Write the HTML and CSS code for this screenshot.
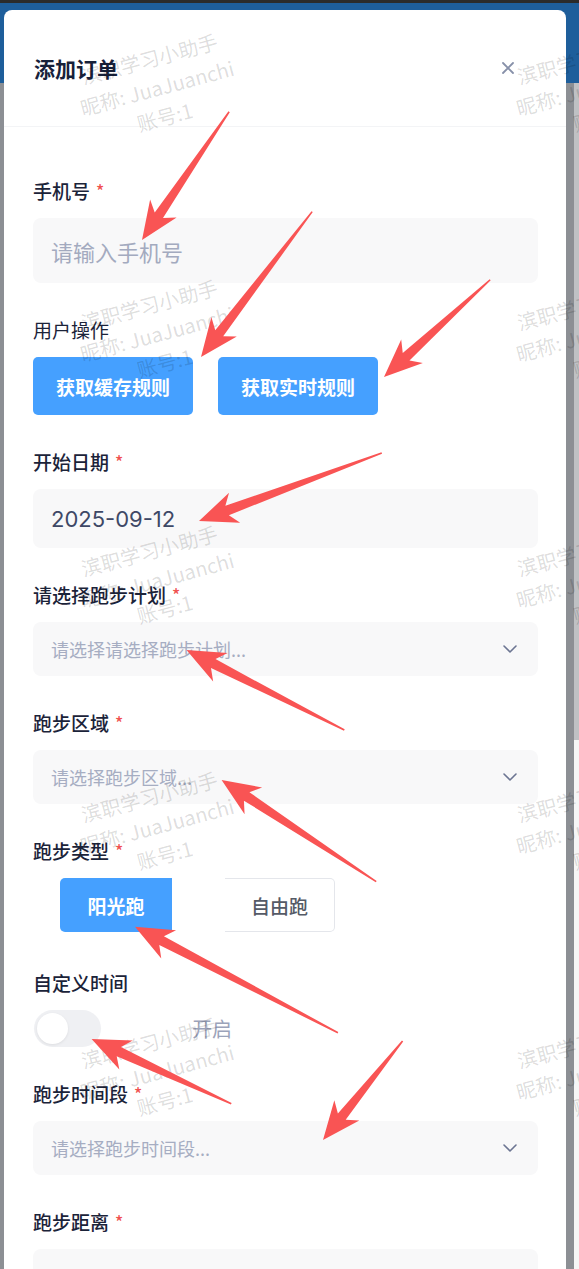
FILE: index.html
```html
<!DOCTYPE html>
<html lang="zh-CN">
<head>
	<meta charset="UTF-8">
	<title>添加订单</title>
	<link rel="stylesheet" href="styles.css">
</head>
<body>
<div class="dialog">
	<div class="dialog-head">
		<h3 class="dialog-title">添加订单</h3>
		<span class="dialog-close">
			<svg viewBox="0 0 12 12" width="12" height="12"><path d="M1 1l10 10M11 1L1 11" stroke="#8790a9" stroke-width="1.8" stroke-linecap="round" fill="none"/></svg>
		</span>
	</div>
	<div class="dialog-body">
		<div class="form-item">
			<div class="form-label req">手机号</div>
			<div class="field field-phone">请输入手机号</div>
		</div>
		<div class="form-item">
			<div class="form-label plain">用户操作</div>
			<div class="btn-row">
				<div class="btn">获取缓存规则</div>
				<div class="btn">获取实时规则</div>
			</div>
		</div>
		<div class="form-item">
			<div class="form-label req">开始日期</div>
			<div class="field field-date">2025-09-12</div>
		</div>
		<div class="form-item">
			<div class="form-label req">请选择跑步计划</div>
			<div class="field select">请选择请选择跑步计划...<svg class="arrow-down" viewBox="0 0 14 8" width="14" height="8"><path d="M1 1l6 6 6-6" stroke="#6c7592" stroke-width="1.6" fill="none" stroke-linecap="round" stroke-linejoin="round"/></svg></div>
		</div>
		<div class="form-item">
			<div class="form-label req">跑步区域</div>
			<div class="field select">请选择跑步区域...<svg class="arrow-down" viewBox="0 0 14 8" width="14" height="8"><path d="M1 1l6 6 6-6" stroke="#6c7592" stroke-width="1.6" fill="none" stroke-linecap="round" stroke-linejoin="round"/></svg></div>
		</div>
		<div class="form-item form-item-seg">
			<div class="form-label req">跑步类型</div>
			<div class="seg">
				<div class="seg-item seg-on">阳光跑</div>
				<div class="seg-item seg-off">自由跑</div>
			</div>
		</div>
		<div class="form-item">
			<div class="form-label">自定义时间</div>
			<div class="switch-row">
				<div class="switch"><div class="knob"></div></div>
				<span class="switch-text">开启</span>
			</div>
		</div>
		<div class="form-item">
			<div class="form-label req">跑步时间段</div>
			<div class="field select">请选择跑步时间段...<svg class="arrow-down" viewBox="0 0 14 8" width="14" height="8"><path d="M1 1l6 6 6-6" stroke="#6c7592" stroke-width="1.6" fill="none" stroke-linecap="round" stroke-linejoin="round"/></svg></div>
		</div>
		<div class="form-item">
			<div class="form-label req">跑步距离</div>
			<div class="field select"></div>
		</div>
	</div>
</div>

<div class="watermark">
	<div class="wm"><div class="wm-text">滨职学习小助手<br>昵称: JuaJuanchi<br>账号:1</div></div>
	<div class="wm"><div class="wm-text">滨职学习小助手<br>昵称: JuaJuanchi<br>账号:1</div></div>
	<div class="wm"><div class="wm-text">滨职学习小助手<br>昵称: JuaJuanchi<br>账号:1</div></div>
	<div class="wm"><div class="wm-text">滨职学习小助手<br>昵称: JuaJuanchi<br>账号:1</div></div>
	<div class="wm"><div class="wm-text">滨职学习小助手<br>昵称: JuaJuanchi<br>账号:1</div></div>
	<div class="wm"><div class="wm-text">滨职学习小助手<br>昵称: JuaJuanchi<br>账号:1</div></div>
	<div class="wm"><div class="wm-text">滨职学习小助手<br>昵称: JuaJuanchi<br>账号:1</div></div>
	<div class="wm"><div class="wm-text">滨职学习小助手<br>昵称: JuaJuanchi<br>账号:1</div></div>
	<div class="wm"><div class="wm-text">滨职学习小助手<br>昵称: JuaJuanchi<br>账号:1</div></div>
	<div class="wm"><div class="wm-text">滨职学习小助手<br>昵称: JuaJuanchi<br>账号:1</div></div>
</div>

<!-- red annotation arrows, tip at origin, tail along +x -->
<svg class="marks" width="579" height="1269" viewBox="0 0 579 1269">
	<g fill="#f95454">
		<polygon transform="translate(142 240) rotate(-55.8)" points="0,0 38,-16 30,-5 155,-0.8 155,0.8 30,5 38,16"/>
		<polygon transform="translate(201 357) rotate(-52.6)" points="0,0 38,-16 30,-5 183,-0.8 183,0.8 30,5 38,16"/>
		<polygon transform="translate(384 377) rotate(-42.5)" points="0,0 38,-16 30,-5 144,-0.8 144,0.8 30,5 38,16"/>
		<polygon transform="translate(199 521) rotate(-20.4)" points="0,0 38,-16 30,-5 195,-0.8 195,0.8 30,5 38,16"/>
		<polygon transform="translate(186.5 650) rotate(26.9)" points="0,0 38,-16 30,-5 177,-0.8 177,0.8 30,5 38,16"/>
		<polygon transform="translate(221.6 780) rotate(33.3)" points="0,0 38,-16 30,-5 185,-0.8 185,0.8 30,5 38,16"/>
		<polygon transform="translate(135 926.7) rotate(27.6)" points="0,0 38,-16 30,-5 229,-0.8 229,0.8 30,5 38,16"/>
		<polygon transform="translate(91.6 1039) rotate(24.9)" points="0,0 38,-16 30,-5 154,-0.8 154,0.8 30,5 38,16"/>
		<polygon transform="translate(323 1140) rotate(-51.2)" points="0,0 38,-16 30,-5 127,-0.8 127,0.8 30,5 38,16"/>
	</g>
</svg>
</body>
</html>
```

FILE: styles.css
```css
*{
	margin: 0;
	padding: 0;
	box-sizing: border-box;
}
body{
	position: relative;
	width: 579px;
	height: 1269px;
	overflow: hidden;
	font-family: "Noto Sans CJK SC", "Noto Sans", sans-serif;
	background:
		linear-gradient(#f6f6f6, #f6f6f6) 574px 740px / 5px 529px no-repeat,
		linear-gradient(#bfc1c4, #bfc1c4) 574px 83px / 5px 657px no-repeat,
		linear-gradient(#2b2b2b 0 3px, #1e5e9b 3px 83px, #8c8f94 83px);
}

.dialog{margin:10px 0 0 4px; width:562px; height:1259px; background:#fff; border-radius:8px 8px 0 0; overflow:hidden;}
.dialog-head{height:117px; display:flex; align-items:center; justify-content:space-between; padding:0 52px 0 30px; border-bottom:1px solid #f3f4f6;}
.dialog-title{font-size:21px; font-weight:700; color:#17213a;}
.dialog-close svg{display:block;}
.dialog-body{padding:53px 28px 0 29px;}

.form-item{margin-bottom:36px;}
.form-item-seg{margin-bottom:40px;}
.form-label{height:22px; font-size:19px; line-height:22px; margin-bottom:16px; color:#1b2339; font-weight:500; white-space:nowrap;}
.form-label.plain{font-weight:400;}
.req::after{content:"*"; display:inline-block; vertical-align:top; line-height:22px; color:#f0524f; margin-left:6px; font-size:17px;}

.field{display:flex; align-items:center; justify-content:space-between; padding:0 21px 0 18px; background:#f8f8f9; border-radius:8px;}
.field-phone{height:65px; font-size:22px; color:#a3aabf;}
.field-date{height:59px; font-family:"Inter", sans-serif; font-size:22px; color:#3e4866;}
.select{height:54px; font-size:18px; color:#a6adc2;}
.arrow-down{display:block; flex:none;}

.btn-row{display:flex; gap:25px;}
.btn{width:160px; height:58px; display:flex; align-items:center; justify-content:center; background:#45a0ff; border-radius:5px; color:#fff; font-size:19px; font-weight:700;}

.seg{display:flex; padding-left:27px;}
.seg-item{height:54px; display:flex; align-items:center; justify-content:center; font-size:19px;}
.seg-on{width:112px; background:#45a0ff; border-radius:5px 0 0 5px; color:#fff; font-weight:700;}
.seg-off{width:110px; margin-left:53px; border:1px solid #e4e6eb; border-left:0; border-radius:0 5px 5px 0; color:#555a66; font-weight:500;}

.switch-row{display:flex; align-items:center;}
.switch{width:67px; height:37px; margin-left:1px; padding:3px; border-radius:19px; background:#eff0f3;}
.knob{width:31px; height:31px; border-radius:50%; background:#fff; box-shadow:0 1px 3px rgba(0,0,0,.08);}
.switch-text{margin-left:91px; font-size:20px; color:#9ba3ba;}

.watermark{position:absolute; left:-61px; top:-35px; display:grid; grid-template-columns:repeat(2, 436px); grid-auto-rows:246px; pointer-events:none;}
.wm{display:flex; align-items:center; justify-content:center;}
.wm-text{transform:rotate(-15deg); text-align:center; white-space:nowrap; font-size:20px; line-height:30px; color:rgba(0,0,0,.14);}

.marks{position:absolute; left:0; top:0; pointer-events:none;}
```
